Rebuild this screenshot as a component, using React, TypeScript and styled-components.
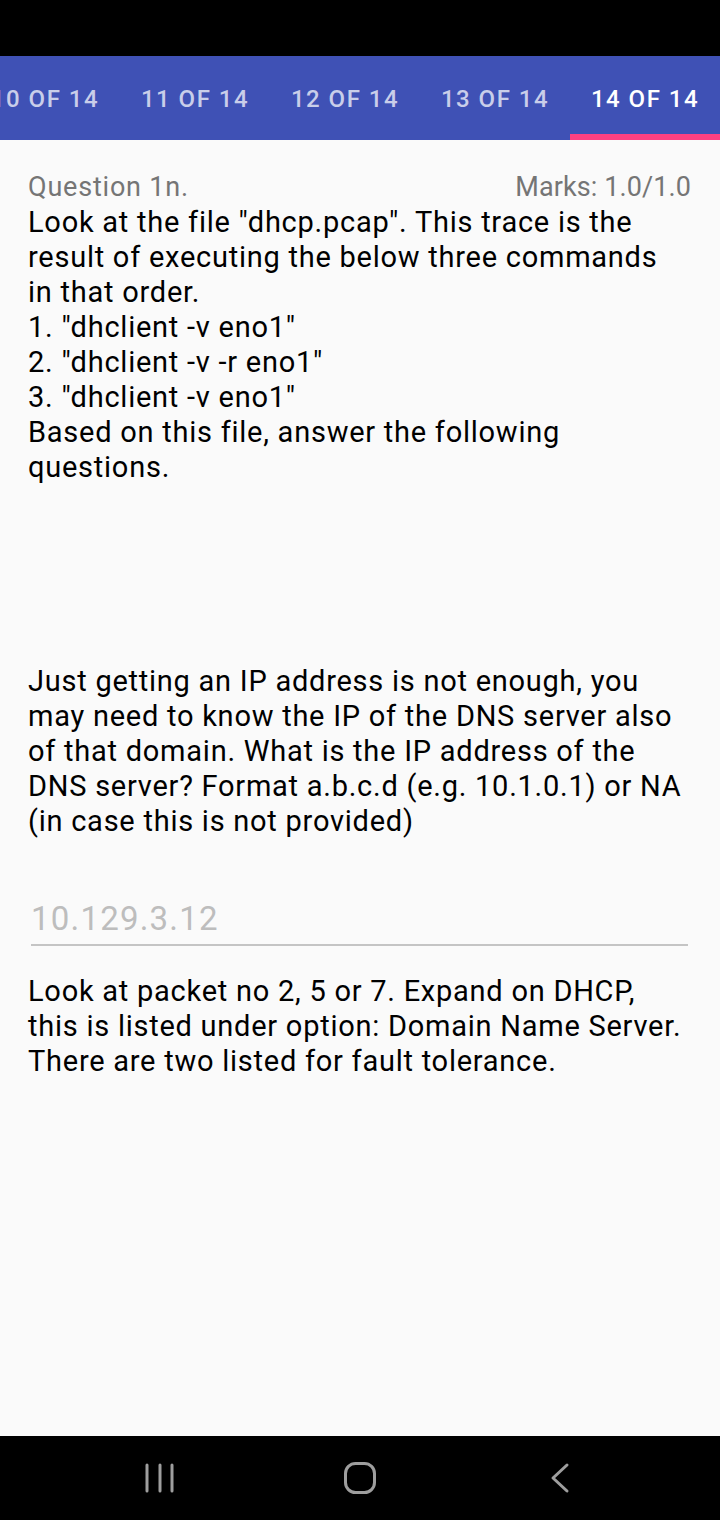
import React from "react";
import styled, { createGlobalStyle } from "styled-components";

const Global = createGlobalStyle`
  html, body { margin: 0; padding: 0; background: #000; }
  body { font-family: Roboto, "Noto Sans", sans-serif; }
  #root { width: 720px; height: 1520px; }
`;

const Screen = styled.div`
  width: 720px;
  height: 1520px;
  display: flex;
  flex-direction: column;
  background: #fafafa;
  overflow: hidden;
`;

const StatusBar = styled.div`
  height: 56px;
  flex: none;
  background: #000;
`;

const TabBar = styled.div`
  height: 84px;
  flex: none;
  background: #3f51b5;
  display: flex;
  overflow: hidden;
`;

const TabStrip = styled.div`
  display: flex;
  margin-left: -30px;
`;

const Tab = styled.div<{ $active?: boolean }>`
  width: 150px;
  flex: none;
  display: flex;
  align-items: center;
  justify-content: center;
  font-family: Roboto, sans-serif;
  font-weight: 500;
  font-size: 24px;
  letter-spacing: 1.5px;
  white-space: nowrap;
  color: ${(p) => (p.$active ? "#ffffff" : "rgba(255,255,255,0.72)")};
  box-sizing: border-box;
  border-bottom: 6px solid ${(p) => (p.$active ? "#ff4081" : "transparent")};
  padding-top: 7px;
`;

const Content = styled.div`
  flex: 1;
  padding: 30px 34px 0 28px;
  display: flex;
  flex-direction: column;
`;

const HeaderRow = styled.div`
  display: flex;
  justify-content: space-between;
  align-items: baseline;
  font-size: 27px;
  letter-spacing: 0.8px;
  line-height: 35px;
  color: #757575;
  height: 35px;
  margin-right: -5px;
`;

const Marks = styled.span`
  letter-spacing: 0.1px;
`;

const Body = styled.div<{ $mt?: number }>`
  font-size: 29px;
  letter-spacing: 0.75px;
  line-height: 35px;
  color: #000;
  margin-top: ${(p) => p.$mt ?? 0}px;
`;

const InputWrap = styled.div`
  margin: 51px -2px 0 3px;
  border-bottom: 2px solid #c4c4c4;
  height: 54px;
  display: flex;
  align-items: center;
`;

const InputText = styled.div`
  font-size: 33px;
  letter-spacing: 1.2px;
  color: #bdbdbd;
  margin-top: 2px;
`;

const NavBar = styled.div`
  height: 84px;
  flex: none;
  background: #000;
  display: flex;
  align-items: center;
  justify-content: center;
  gap: 140px;
`;

const NavSlot = styled.div`
  width: 60px;
  height: 60px;
  display: flex;
  align-items: center;
  justify-content: center;
`;

export default function App() {
  const tabs = ["10 OF 14", "11 OF 14", "12 OF 14", "13 OF 14", "14 OF 14"];
  return (
    <>
      <Global />
      <Screen>
        <StatusBar />
        <TabBar>
          <TabStrip>
            {tabs.map((t, i) => (
              <Tab key={t} $active={i === tabs.length - 1}>
                {t}
              </Tab>
            ))}
          </TabStrip>
        </TabBar>
        <Content>
          <HeaderRow>
            <span>Question 1n.</span>
            <Marks>Marks: 1.0/1.0</Marks>
          </HeaderRow>
          <Body>
            Look at the file "dhcp.pcap". This trace is the result of executing
            the below three commands in that order.
            <br />
            1. "dhclient -v eno1"
            <br />
            2. "dhclient -v -r eno1"
            <br />
            3. "dhclient -v eno1"
            <br />
            Based on this file, answer the following questions.
          </Body>
          <Body $mt={179}>
            Just getting an IP address is not enough, you may need to know the
            IP of the DNS server also of that domain. What is the IP address of
            the DNS server? Format a.b.c.d (e.g. 10.1.0.1) or NA (in case this
            is not provided)
          </Body>
          <InputWrap>
            <InputText>10.129.3.12</InputText>
          </InputWrap>
          <Body $mt={28}>
            Look at packet no 2, 5 or 7. Expand on DHCP, this is listed under
            option: Domain Name Server. There are two listed for fault
            tolerance.
          </Body>
        </Content>
        <NavBar>
          <NavSlot>
            <svg width="30" height="30" viewBox="0 0 30 30">
              <g stroke="#9e9e9e" strokeWidth="3" strokeLinecap="round">
                <line x1="2" y1="2" x2="2" y2="28" />
                <line x1="15" y1="2" x2="15" y2="28" />
                <line x1="27" y1="2" x2="27" y2="28" />
              </g>
            </svg>
          </NavSlot>
          <NavSlot>
            <svg width="32" height="32" viewBox="0 0 32 32">
              <rect x="1.5" y="1.5" width="29" height="29" rx="10" fill="none" stroke="#9e9e9e" strokeWidth="3" />
            </svg>
          </NavSlot>
          <NavSlot>
            <svg width="20" height="32" viewBox="0 0 20 32">
              <polyline points="17,3 3,16 17,29" fill="none" stroke="#9e9e9e" strokeWidth="3" strokeLinecap="round" strokeLinejoin="round" />
            </svg>
          </NavSlot>
        </NavBar>
      </Screen>
    </>
  );
}
